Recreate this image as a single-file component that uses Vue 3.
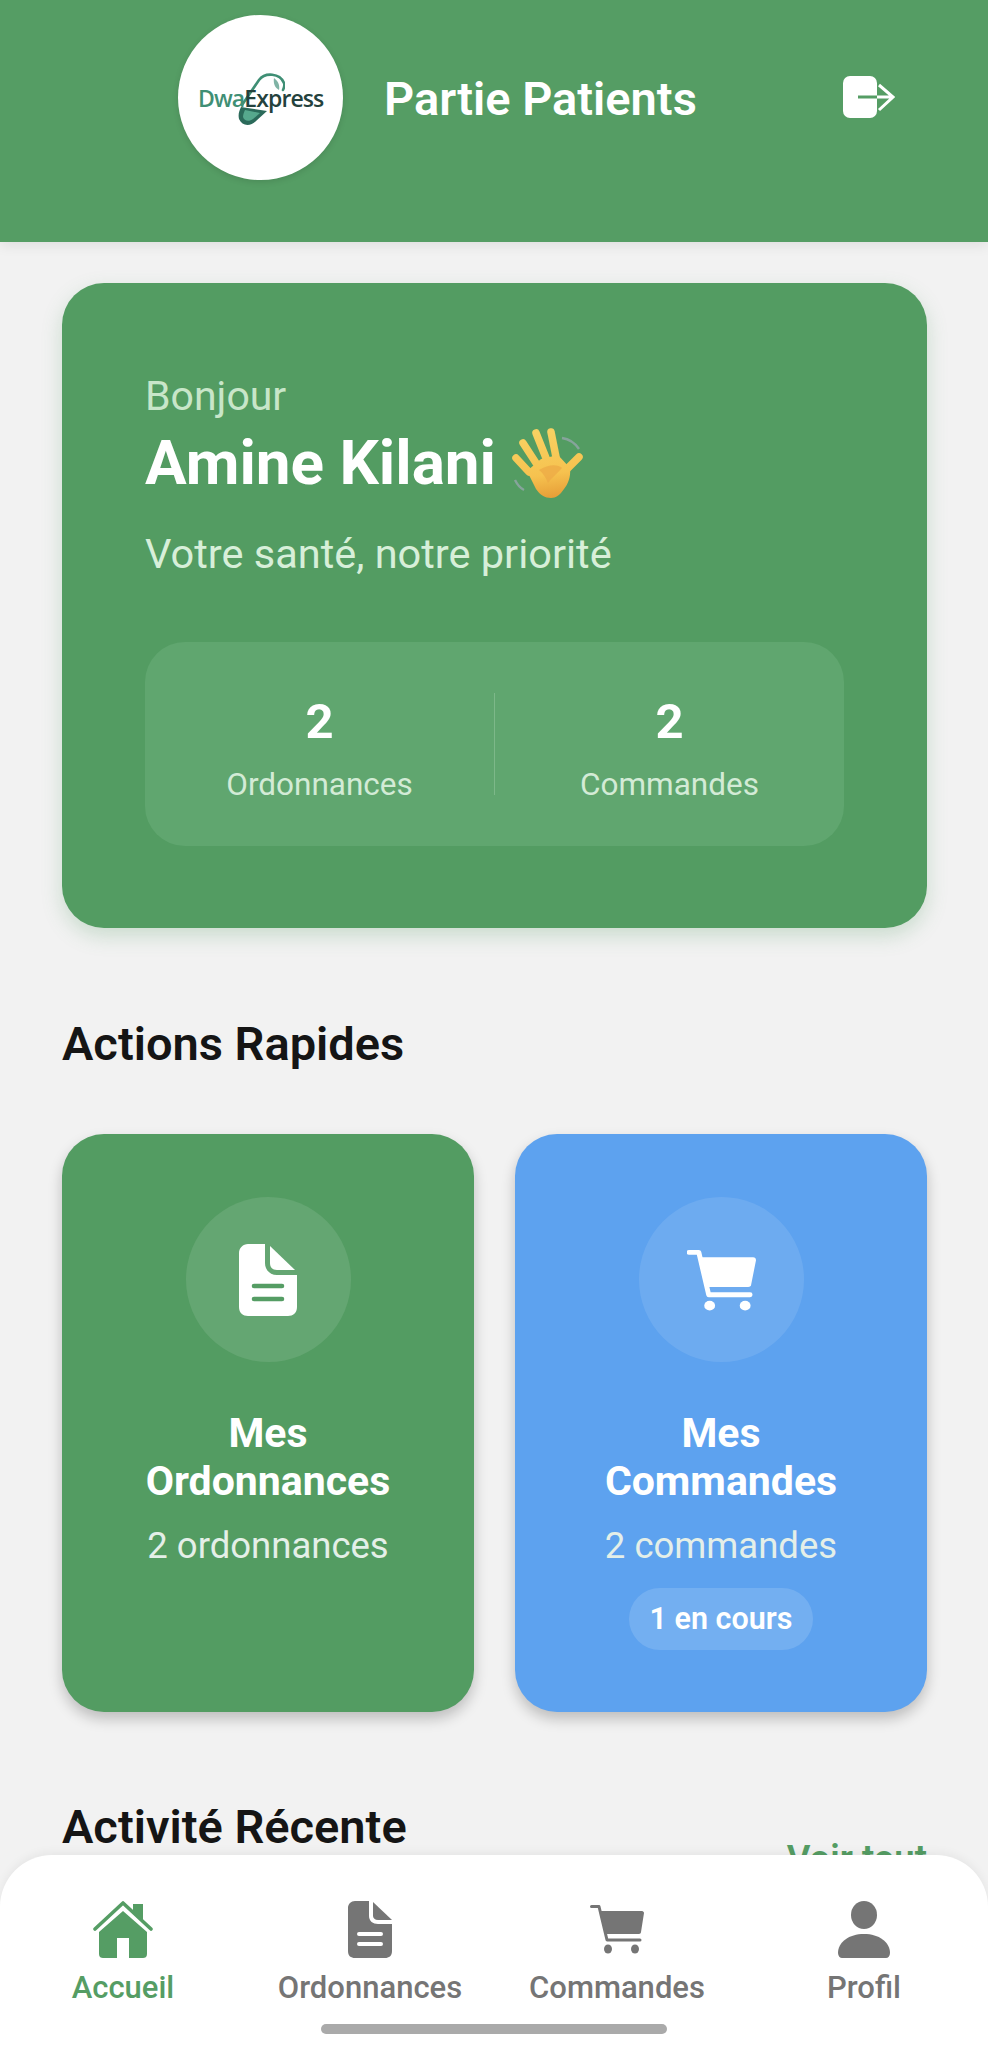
<template>
  <div class="screen">
    <header class="top-bar">
      <div class="logo-circle">
        <svg class="pill" viewBox="0 0 47 52">
          <path d="M4 32 L21 7 C27 -1 42 0 46 10 C47 13 46 15 45 17" fill="none" stroke="#3f8f75" stroke-width="2.6" stroke-linecap="round" />
          <path d="M36 5 C40 8 42 12 41 17 C37 15 35 10 36 5Z" fill="#7fb3a5" />
          <path d="M3 34 L29 38 L18 48 C12 54 4 53 1 46 C0 42 1 38 3 34Z" fill="#2b6a5a" />
          <path d="M7 37 L22 40 L15 46 C11 49 6 48 5 44 C5 42 6 39 7 37Z" fill="#56a88d" />
        </svg>
        <span class="logo-text"><span class="dwa">Dwa</span>Express</span>
      </div>
      <h1 class="top-title">Partie Patients</h1>
      <svg class="logout" viewBox="0 0 52 43">
        <rect x="0" y="0" width="34" height="42" rx="7" fill="#fff" />
        <path d="M34 21 H50 M36 9 L50 21 L36 34" fill="none" stroke="#fff" stroke-width="3" />
        <path d="M15 21 H34" stroke="#559d64" stroke-width="3" />
      </svg>
    </header>

    <main class="content">
      <section class="hero">
        <p class="hello">Bonjour</p>
        <div class="name-row">
          <h2 class="name">Amine Kilani</h2>
          <svg class="wave" viewBox="0 0 72 72">
            <defs>
              <linearGradient id="handFill" gradientUnits="userSpaceOnUse" x1="30" y1="5" x2="40" y2="70">
                <stop offset="0" stop-color="#f8d162" />
                <stop offset="0.65" stop-color="#f6c24f" />
                <stop offset="1" stop-color="#e79f38" />
              </linearGradient>
            </defs>
            <path d="M50 11 C57 12 63 16 67 22 M3 53 C5 57 8 61 12 63" fill="none" stroke="#86a49b" stroke-width="2.4" />
            <g stroke="url(#handFill)" stroke-width="7.5" stroke-linecap="round">
              <path d="M4 31 L17.01 45" />
              <path d="M11 16 L24 36" />
              <path d="M24 6 L34 31" />
              <path d="M39 5 L44 30" />
              <path d="M67 30 L54 43" />
            </g>
            <path d="M15 44 L29 32 L46 28 L58 41 C59 50 56 57 52 62 C48 68 44 71 39 71 C33 71 28 68 24 62 C21 56 18 50 15 44Z" fill="url(#handFill)" />
            <path d="M27 43 C36 37 46 37 50 41 C46 46 40 50 36 56 C34 51 31 46 27 43Z" fill="#eca945" opacity="0.75" />
          </svg>
        </div>
        <p class="tagline">Votre santé, notre priorité</p>
        <div class="stats">
          <div class="stat">
            <strong>2</strong>
            <span>Ordonnances</span>
          </div>
          <div class="stat-divider"></div>
          <div class="stat">
            <strong>2</strong>
            <span>Commandes</span>
          </div>
        </div>
      </section>

      <h2 class="section-title">Actions Rapides</h2>

      <div class="actions">
        <article class="action-card green">
          <div class="action-icon">
            <svg viewBox="0 0 58 72" class="doc-icon">
              <path d="M9 0 H26 V19 C26 26 31 31 38 31 H58 V63 C58 69 54 72 49 72 H9 C4 72 0 69 0 63 V9 C0 4 4 0 9 0Z" fill="#fff" />
              <path d="M31 2 L56 26 H38 C33 26 31 23 31 19Z" fill="#fff" />
              <path d="M15 42 H43 M15 55 H43" stroke="#559d64" stroke-width="4.6" stroke-linecap="round" />
            </svg>
          </div>
          <h3>Mes<br />Ordonnances</h3>
          <p>2 ordonnances</p>
        </article>
        <article class="action-card blue">
          <div class="action-icon">
            <svg viewBox="0 0 70 62" class="cart-icon">
              <path d="M2 3 H12 L22 46 H64" fill="none" stroke="#fff" stroke-width="5" stroke-linecap="round" stroke-linejoin="round" />
              <path d="M13 8 H67 C69 8 70 9 70 11 L65 36 C65 37 64 38 62 38 H20Z" fill="#fff" />
              <ellipse cx="23" cy="57" rx="5.5" ry="5" fill="#fff" />
              <ellipse cx="59" cy="57" rx="5.5" ry="5" fill="#fff" />
            </svg>
          </div>
          <h3>Mes<br />Commandes</h3>
          <p>2 commandes</p>
          <span class="pill-badge">1 en cours</span>
        </article>
      </div>

      <div class="recent-head">
        <h2 class="section-title">Activité Récente</h2>
        <a class="see-all">Voir tout</a>
      </div>
    </main>

    <nav class="tab-bar">
      <div v-for="tab in tabs" :key="tab.label" class="tab" :class="{ active: tab.active }">
        <div class="tab-icon-box">
          <svg v-if="tab.icon === 'home'" viewBox="0 0 60 57" class="home-icon">
            <path d="M2 28 L30 2 L58 28" fill="none" stroke="currentColor" stroke-width="3.6" stroke-linecap="round" stroke-linejoin="round" />
            <path d="M40 3 H50 V19 L40 10Z" fill="currentColor" />
            <path d="M30 10 L54 31 V53 C54 56 52 57 50 57 H36 V37 H24 V57 H10 C8 57 6 56 6 53 V31Z" fill="currentColor" />
          </svg>
          <svg v-else-if="tab.icon === 'doc'" viewBox="0 0 44 57" class="doc-tab-icon">
            <path d="M7 0 H21 V15 C21 20 25 23 30 23 H44 V50 C44 55 41 57 37 57 H7 C3 57 0 55 0 50 V7 C0 3 3 0 7 0Z" fill="currentColor" />
            <path d="M25 1 L44 19 H30 C27 19 25 17 25 15Z" fill="currentColor" />
            <path d="M11 33 H33 M11 43 H33" stroke="#fff" stroke-width="4" stroke-linecap="round" />
          </svg>
          <svg v-else-if="tab.icon === 'cart'" viewBox="0 0 54 49" class="cart-tab-icon">
            <path d="M1.5 1.5 H9 L17 35 H50" fill="none" stroke="currentColor" stroke-width="3" stroke-linecap="round" stroke-linejoin="round" />
            <path d="M10 6 H52 C53 6 54 7 54 8 L51 27 C51 28 50 29 49 29 H15Z" fill="currentColor" />
            <ellipse cx="18" cy="44" rx="4" ry="4.6" fill="currentColor" />
            <ellipse cx="45" cy="44" rx="4" ry="4.6" fill="currentColor" />
          </svg>
          <svg v-else viewBox="0 0 52 57" class="user-icon">
            <ellipse cx="26" cy="14" rx="13" ry="14" fill="currentColor" />
            <path d="M0 52 C0 41 11 33 26 33 C41 33 52 41 52 52 C52 55 50 57 48 57 H4 C2 57 0 55 0 52Z" fill="currentColor" />
          </svg>
        </div>
        <span>{{ tab.label }}</span>
      </div>
      <div class="home-indicator"></div>
    </nav>
  </div>
</template>

<script setup>
const tabs = [
  { label: "Accueil", icon: "home", active: true },
  { label: "Ordonnances", icon: "doc" },
  { label: "Commandes", icon: "cart" },
  { label: "Profil", icon: "user" },
];
</script>

<style>
html,
body {
  margin: 0;
  background: #f2f2f2;
}
</style>

<style scoped>
.screen {
  position: relative;
  width: 988px;
  height: 2048px;
  overflow: hidden;
  background: #f2f2f2;
  font-family: Roboto, "Liberation Sans", sans-serif;
}

.top-bar {
  display: flex;
  align-items: flex-start;
  height: 242px;
  box-sizing: border-box;
  padding: 15px 93px 0 178px;
  background: #559d64;
  box-shadow: 0 4px 12px rgba(0, 0, 0, 0.08);
}

.logo-circle {
  position: relative;
  flex: none;
  width: 165px;
  height: 165px;
  border-radius: 50%;
  background: #fff;
  box-shadow: 0 2px 6px rgba(0, 0, 0, 0.12);
}

.pill {
  position: absolute;
  left: 60px;
  top: 58px;
  width: 47px;
  height: 52px;
}

.logo-text {
  position: absolute;
  left: 20px;
  top: 68px;
  font-family: "Open Sans", sans-serif;
  font-size: 23px;
  font-weight: 600;
  line-height: 30px;
  letter-spacing: -0.9px;
  color: #24423d;
  white-space: nowrap;
}

.dwa {
  color: #3f8f75;
}

.top-title {
  margin: 57px 0 0 41px;
  font-size: 47px;
  line-height: 54px;
  font-weight: 600;
  color: #fff;
}

.logout {
  width: 52px;
  height: 43px;
  margin: 61px 0 0 auto;
}

.content {
  padding: 41px 61px 0 62px;
}

.hero {
  height: 645px;
  box-sizing: border-box;
  padding: 89px 83px 0;
  border-radius: 42px;
  background: #539c62;
  box-shadow: 0 8px 20px rgba(85, 157, 100, 0.25);
}

.hello {
  margin: 0;
  font-size: 41px;
  line-height: 48px;
  color: #c8e6c9;
}

.name-row {
  display: flex;
  align-items: center;
  gap: 16px;
  margin-top: 7px;
}

.name {
  margin: 0;
  font-size: 62px;
  line-height: 72px;
  font-weight: 700;
  color: #fff;
}

.wave {
  width: 72px;
  height: 72px;
}

.tagline {
  margin: 30px 0 0;
  font-size: 41.5px;
  line-height: 50px;
  color: #d7efd9;
}

.stats {
  display: flex;
  align-items: center;
  height: 204px;
  box-sizing: border-box;
  padding-top: 8px;
  margin-top: 63px;
  border-radius: 40px;
  background: #60a66f;
}

.stat {
  flex: 1;
  display: flex;
  flex-direction: column;
  align-items: center;
  gap: 16px;
  color: #fff;
}

.stat strong {
  font-size: 49px;
  line-height: 58px;
  font-weight: 700;
}

.stat span {
  font-size: 31.5px;
  line-height: 36px;
  color: #d3ebd6;
}

.stat-divider {
  width: 1px;
  height: 102px;
  margin-top: -8px;
  background: #7db889;
}

.section-title {
  margin: 88px 0 0;
  font-size: 47px;
  line-height: 56px;
  font-weight: 600;
  color: #151515;
}

.actions {
  display: grid;
  grid-template-columns: 412px 412px;
  gap: 41px;
  margin-top: 62px;
}

.action-card {
  display: flex;
  flex-direction: column;
  align-items: center;
  height: 578px;
  box-sizing: border-box;
  padding-top: 63px;
  border-radius: 42px;
  color: #fff;
  text-align: center;
  box-shadow: 0 7px 14px rgba(0, 0, 0, 0.22);
}

.green {
  background: #539c62;
}

.blue {
  background: #5da2ef;
}

.action-icon {
  display: flex;
  align-items: center;
  justify-content: center;
  width: 165px;
  height: 165px;
  border-radius: 50%;
  background: rgba(255, 255, 255, 0.1);
}

.doc-icon {
  width: 58px;
  height: 72px;
}

.cart-icon {
  width: 69px;
  height: 62px;
}

.action-card h3 {
  margin: 47px 0 0;
  font-size: 41px;
  line-height: 48px;
  font-weight: 700;
}

.action-card p {
  margin: 19px 0 0;
  font-size: 36.5px;
  line-height: 44px;
  color: #e4efe8;
}

.pill-badge {
  margin-top: 20px;
  padding: 0 21px;
  border-radius: 31px;
  font-size: 30.5px;
  font-weight: 600;
  line-height: 62px;
  background: rgba(255, 255, 255, 0.14);
}

.recent-head {
  display: flex;
  justify-content: space-between;
  align-items: flex-end;
}

.recent-head .section-title {
  margin-top: 87px;
}

.see-all {
  font-size: 36.5px;
  line-height: 44px;
  font-weight: 600;
  color: #559d64;
  transform: translateY(26px);
}

.tab-bar {
  position: absolute;
  left: 0;
  right: 0;
  bottom: 0;
  display: grid;
  grid-template-columns: 246px 248px 246px 248px;
  height: 193px;
  box-sizing: border-box;
  padding-top: 45px;
  border-radius: 52px 52px 0 0;
  background: #fff;
  box-shadow: 0 -3px 10px rgba(0, 0, 0, 0.05);
}

.tab {
  display: flex;
  flex-direction: column;
  align-items: center;
  font-size: 31px;
  line-height: 40px;
  font-weight: 500;
  color: #757575;
}

.tab.active {
  color: #559d64;
}

.tab-icon-box {
  display: flex;
  align-items: center;
  justify-content: center;
  height: 58px;
  margin-bottom: 10px;
}

.home-icon {
  width: 60px;
  height: 57px;
}

.doc-tab-icon {
  width: 44px;
  height: 57px;
}

.cart-tab-icon {
  width: 54px;
  height: 49px;
}

.user-icon {
  width: 52px;
  height: 57px;
}

.home-indicator {
  position: absolute;
  left: 321px;
  bottom: 14px;
  width: 346px;
  height: 10px;
  border-radius: 5px;
  background: #aaa;
}
</style>
